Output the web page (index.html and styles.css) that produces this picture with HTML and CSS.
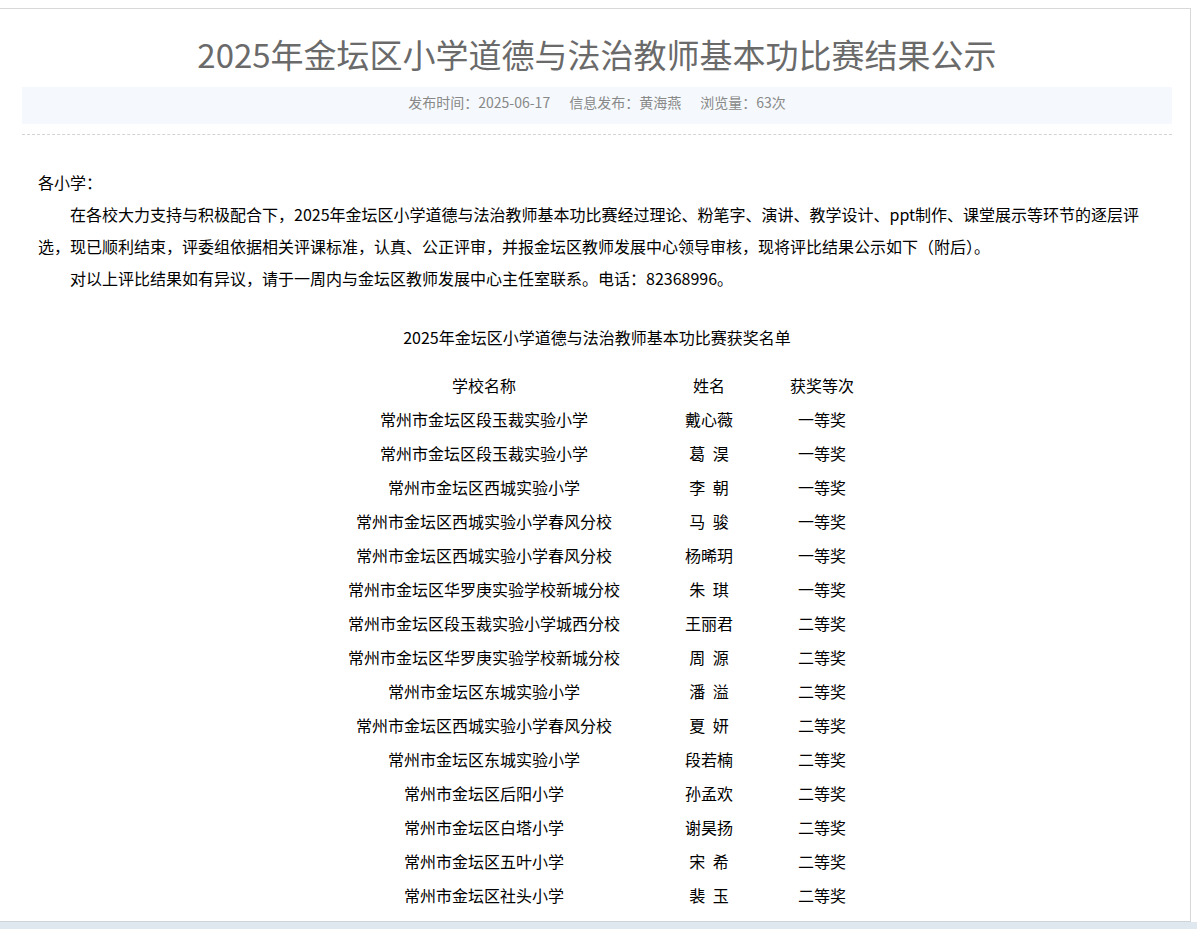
FILE: index.html
```html
<!DOCTYPE html>
<html lang="zh-CN">
<head>
<meta charset="utf-8">
<title>2025年金坛区小学道德与法治教师基本功比赛结果公示</title>
<link rel="stylesheet" href="styles.css">
</head>
<body>
<div class="topgap"></div>
<div class="frame">
  <div class="article">
    <div class="header">
      <h1 class="title">2025年金坛区小学道德与法治教师基本功比赛结果公示</h1>
      <div class="meta">
        <span>发布时间：2025-06-17</span>
        <span>信息发布：黄海燕</span>
        <span>浏览量：63次</span>
      </div>
    </div>
    <div class="content">
      <div class="intro">
        <p class="noindent">各小学：</p>
        <p>在各校大力支持与积极配合下，2025年金坛区小学道德与法治教师基本功比赛经过理论、粉笔字、演讲、教学设计、ppt制作、课堂展示等环节的逐层评选，现已顺利结束，评委组依据相关评课标准，认真、公正评审，并报金坛区教师发展中心领导审核，现将评比结果公示如下（附后）。</p>
        <p>对以上评比结果如有异议，请于一周内与金坛区教师发展中心主任室联系。电话：82368996。</p>
      </div>
      <p class="caption">2025年金坛区小学道德与法治教师基本功比赛获奖名单</p>
      <table class="awards">
        <colgroup>
          <col class="c-school">
          <col class="c-name">
          <col class="c-level">
        </colgroup>
        <tr><td>学校名称</td><td>姓名</td><td>获奖等次</td></tr>
        <tr><td>常州市金坛区段玉裁实验小学</td><td>戴心薇</td><td>一等奖</td></tr>
        <tr><td>常州市金坛区段玉裁实验小学</td><td>葛 淏</td><td>一等奖</td></tr>
        <tr><td>常州市金坛区西城实验小学</td><td>李 朝</td><td>一等奖</td></tr>
        <tr><td>常州市金坛区西城实验小学春风分校</td><td>马 骏</td><td>一等奖</td></tr>
        <tr><td>常州市金坛区西城实验小学春风分校</td><td>杨晞玥</td><td>一等奖</td></tr>
        <tr><td>常州市金坛区华罗庚实验学校新城分校</td><td>朱 琪</td><td>一等奖</td></tr>
        <tr><td>常州市金坛区段玉裁实验小学城西分校</td><td>王丽君</td><td>二等奖</td></tr>
        <tr><td>常州市金坛区华罗庚实验学校新城分校</td><td>周 源</td><td>二等奖</td></tr>
        <tr><td>常州市金坛区东城实验小学</td><td>潘 溢</td><td>二等奖</td></tr>
        <tr><td>常州市金坛区西城实验小学春风分校</td><td>夏 妍</td><td>二等奖</td></tr>
        <tr><td>常州市金坛区东城实验小学</td><td>段若楠</td><td>二等奖</td></tr>
        <tr><td>常州市金坛区后阳小学</td><td>孙孟欢</td><td>二等奖</td></tr>
        <tr><td>常州市金坛区白塔小学</td><td>谢昊扬</td><td>二等奖</td></tr>
        <tr><td>常州市金坛区五叶小学</td><td>宋 希</td><td>二等奖</td></tr>
        <tr><td>常州市金坛区社头小学</td><td>裴 玉</td><td>二等奖</td></tr>
      </table>
    </div>
  </div>
</div>
<div class="bottombar"></div>
</body>
</html>
```
FILE: styles.css
```css
html, body {
  margin: 0;
  padding: 0;
  background: #ffffff;
}
body {
  font-family: "Noto Sans CJK SC", "Noto Sans", sans-serif;
  color: #000;
  overflow: hidden;
}
.topgap {
  height: 8px;
  background: #fff;
}
.frame {
  box-sizing: border-box;
  width: 1191px;
  height: 914px;
  border-top: 1px solid #d8d8d8;
  border-right: 1px solid #d8d8d8;
  border-bottom: 1px solid #cfd4d8;
  overflow: hidden;
  background: #fff;
}
.bottombar {
  height: 7px;
  background: #dfe7ef;
}
.article {
  margin-left: 22px;
  width: 1150px;
}
.header {
  padding-top: 18px;
  padding-bottom: 10px;
  border-bottom: 1px dashed #d4d4d4;
}
.title {
  margin: 0;
  font-size: 33px;
  line-height: 54px;
  font-weight: normal;
  color: #6a6a6a;
  text-align: center;
}
.meta {
  margin-top: 6px;
  height: 37px;
  line-height: 30px;
  background: #f5f9fd;
  color: #888;
  font-size: 14px;
  display: flex;
  justify-content: center;
  gap: 19px;
}
.content {
  padding-top: 31px;
}
.intro {
  padding: 0 24px 0 16px;
}
.intro p {
  margin: 0;
  font-size: 16px;
  line-height: 32px;
  text-indent: 2em;
}
.intro p.noindent {
  text-indent: 0;
}
.caption {
  margin: 27px 0 0;
  font-size: 16px;
  line-height: 32px;
  text-align: center;
}
.awards {
  margin: 15px auto 0;
  border-collapse: collapse;
  table-layout: fixed;
  width: 538px;
  font-size: 16px;
}
.c-school { width: 312px; }
.c-name { width: 138px; }
.c-level { width: 88px; }
.awards td {
  height: 34px;
  padding: 0;
  line-height: 34px;
  text-align: center;
  white-space: nowrap;
  word-spacing: 4px;
}
```
